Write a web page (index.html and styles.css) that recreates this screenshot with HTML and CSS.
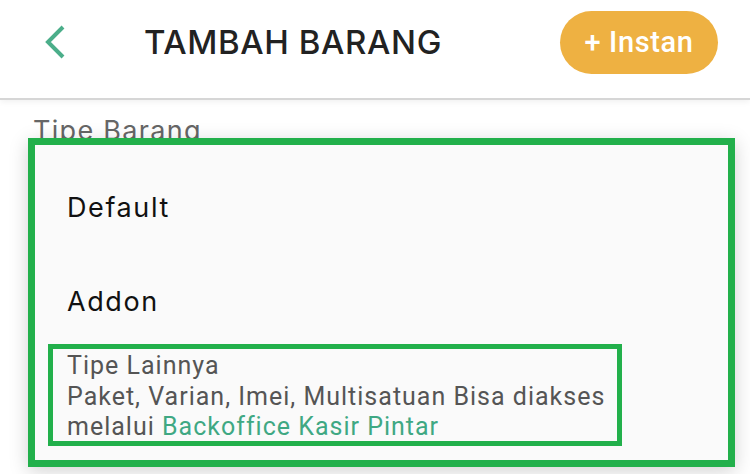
FILE: index.html
```html
<!DOCTYPE html>
<html lang="en">

<head>
    <meta charset="UTF-8">
    <title>Tambah Barang</title>
    <link rel="stylesheet" href="styles.css">
</head>

<body>
    <header class="topbar">
        <a class="back" href="#">
            <svg width="22" height="34" viewBox="0 0 22 34">
                <polyline points="19,2 4,17 19,32" fill="none" stroke="#4bae8a" stroke-width="4" />
            </svg>
        </a>
        <h1 class="title">TAMBAH BARANG</h1>
        <button class="btn-instan">+ Instan</button>
    </header>

    <div class="content">
        <label class="field-label">Tipe Barang</label>
    </div>

    <!-- dropdown pilihan tipe barang -->
    <div class="dropdown">
        <div class="option">Default</div>
        <div class="option">Addon</div>
        <div class="note">
            <p>Tipe Lainnya</p>
            <p>Paket, Varian, Imei, Multisatuan Bisa diakses</p>
            <p>melalui <span class="link">Backoffice Kasir Pintar</span></p>
        </div>
    </div>
</body>

</html>
```

FILE: styles.css
```css
/* Reset */
body,
h1,
p {
    margin: 0;
    padding: 0;
}

body {
    background-color: #fff;
    font-family: Inter, "Noto Sans", sans-serif;
    width: 750px;
    height: 474px;
    overflow: hidden;
    position: relative;
}

/* Header */
.topbar {
    height: 84px;
    padding-bottom: 14px;
    display: flex;
    align-items: center;
    border-bottom: 2px solid #d6d6d6;
    box-shadow: 0 2px 6px rgba(0, 0, 0, 0.06);
}

.back {
    display: flex;
    margin-left: 44px;
}

.title {
    margin-left: 78px;
    font-size: 33px;
    font-weight: 500;
    color: #222;
    letter-spacing: 0.6px;
}

.btn-instan {
    margin-left: auto;
    margin-right: 32px;
    width: 158px;
    height: 63px;
    border: none;
    border-radius: 32px;
    background-color: #eeb142;
    color: #fff;
    font-family: Roboto, sans-serif;
    font-size: 29px;
    font-weight: 500;
    letter-spacing: 0.6px;
}

/* Form */
.content {
    padding: 14px 33px;
}

.field-label {
    font-size: 27px;
    color: #666;
    letter-spacing: 1.3px;
}

/* Dropdown */
.dropdown {
    position: absolute;
    left: 28px;
    top: 138px;
    width: 707px;
    box-sizing: border-box;
    border: 7px solid #22b04b;
    background-color: #fafafa;
    padding: 15px 0 14px;
    box-shadow: 0 4px 18px rgba(0, 0, 0, 0.18);
}

.option {
    height: 94px;
    display: flex;
    align-items: center;
    padding-left: 32px;
    font-size: 27px;
    color: #111;
    letter-spacing: 1.6px;
}

.note {
    margin: -4px 0 0 13px;
    width: 574px;
    box-sizing: border-box;
    border: 5px solid #22b04b;
    padding: 2px 14px 0;
    height: 102px;
    font-family: Roboto, sans-serif;
    font-size: 25px;
    line-height: 30.5px;
    color: #555;
    letter-spacing: 1px;
    white-space: nowrap;
}

.link {
    color: #3fa883;
}
```
